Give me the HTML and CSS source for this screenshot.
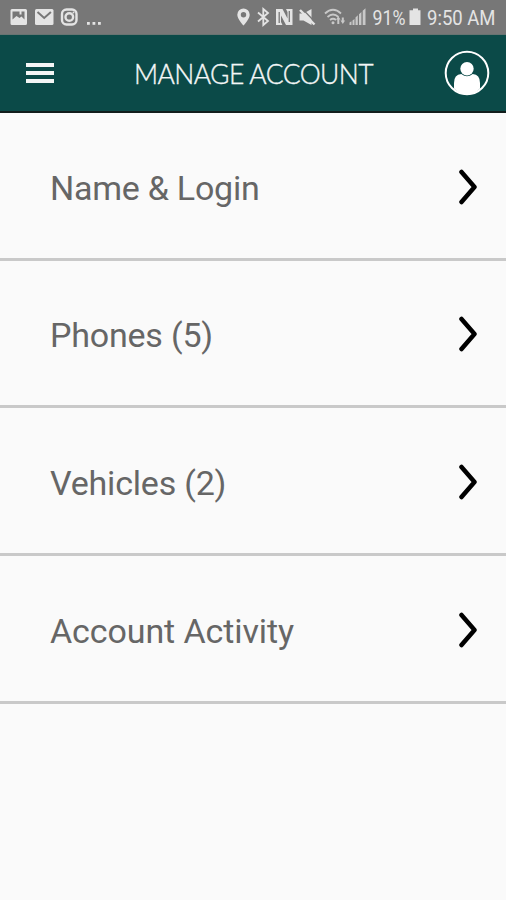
FILE: index.html
```html
<!DOCTYPE html>
<html lang="en">
<head>
<meta charset="utf-8">
<meta name="viewport" content="width=device-width, initial-scale=1">
<title>Manage Account</title>
<link rel="stylesheet" href="styles.css">
</head>
<body>
<div class="status">
  <svg class="status-left" width="106" height="34" viewBox="0 0 106 34">
    <path fill-rule="evenodd" d="M12 9h13.500q1.500 0 1.500 1.500v13q0 1.500-1.500 1.500h-13.500q-1.500 0-1.500-1.500v-13q0-1.500 1.500-1.500zM12.500 11.500v8l4-3.500 3 2 2-1.500 3 3v-8h-3v3h-2v-3z"/>
    <rect x="35" y="9" width="18.500" height="16" rx="1.500"/>
    <path class="cut" d="M37.500 12l6.700 6 6.700-6"/>
    <rect class="line" x="62" y="9.500" width="14.500" height="15" rx="4.500"/>
    <circle class="line" cx="69.300" cy="17" r="3.800"/>
    <circle cx="73.500" cy="12.500" r="1"/>
    <rect x="87" y="22" width="2.800" height="2.800"/><rect x="92.500" y="22" width="2.800" height="2.800"/><rect x="98" y="22" width="2.800" height="2.800"/>
  </svg>
  <svg class="status-right" width="276" height="34" viewBox="230 0 276 34">
    <path fill-rule="evenodd" d="M243.500 8.500a6.200 6.200 0 0 0-6.200 6.200c0 4.300 6.200 10.800 6.200 10.800s6.200-6.500 6.200-10.800a6.200 6.200 0 0 0-6.200-6.200zm0 3.600a2.700 2.700 0 1 1 0 5.400a2.700 2.700 0 0 1 0-5.400z"/>
    <path class="line thin" d="M258 12.500l10 8.500-4.700 4v-16l4.700 4-10 8.500"/>
    <path d="M276 9h6.500l5 9.500v-6.500l-1.500-3h6.500v16h-6.500l-5-9.500v6.500l1.500 3h-6.500z"/>
    <path class="slash" d="M279.200 23v-11M289.300 11v11"/>
    <path d="M299.500 13.500h4l8-4.500v16l-8-4.500h-4z"/>
    <path class="slash" d="M301.500 8l14.500 15"/>
    <path class="line" d="M300 10l14.500 14.500"/>
    <g class="dim">
      <path class="line thin" d="M325 13.500q8-7.500 16 0M327.500 17q5.500-5 11 0M330 20q3-2.500 6 0"/>
      <circle cx="333" cy="22.800" r="1.500"/>
      <path d="M336 19.500l2.300-3 2.300 3h-1.300v4.500h-2v-4.500zM340.500 20.500h1.300v-3h2v3h1.300l-2.300 3.500z"/>
      <path d="M349.500 22.500l2-1.200v3.700h-2zM352.500 20.500l2-1.500v6h-2zM355.500 17.500l2.300-2.200v9.700h-2.300zM359 14.200l2.400-2.200v13h-2.400zM362.700 10.800l2.800-2.500v16.700h-2.800z"/>
    </g>
    <text x="372.500" y="25" textLength="33" lengthAdjust="spacingAndGlyphs">91%</text>
    <path d="M413 8.500h5v1.800h2.500v14.700h-11v-14.700h3.500z"/>
    <text x="427" y="25" textLength="68.500" lengthAdjust="spacingAndGlyphs">9:50 AM</text>
  </svg>
</div>
<header class="bar">
  <button class="menu" aria-label="Menu"><span></span><span></span><span></span></button>
  <h1>MANAGE ACCOUNT</h1>
  <svg class="avatar" width="46" height="46" viewBox="0 0 46 46">
    <circle class="ring" cx="23" cy="23" r="21.300"/>
    <circle cx="23" cy="18.700" r="6.700"/>
    <path d="M10 38.500v-5.500q0-8.500 7.300-9q5.700 4.500 11.400 0q7.300.500 7.300 9v5.500q-5.500 6-13 6t-13-6z"/>
  </svg>
</header>
<main>
  <a class="row"><span class="label name">Name &amp; Login</span><svg width="20" height="36" viewBox="0 0 20 36"><path d="M3.500 3l13 15-13 15"/></svg></a>
  <a class="row"><span class="label phones">Phones (5)</span><svg width="20" height="36" viewBox="0 0 20 36"><path d="M3.500 3l13 15-13 15"/></svg></a>
  <a class="row"><span class="label vehicles">Vehicles (2)</span><svg width="20" height="36" viewBox="0 0 20 36"><path d="M3.500 3l13 15-13 15"/></svg></a>
  <a class="row"><span class="label activity">Account Activity</span><svg width="20" height="36" viewBox="0 0 20 36"><path d="M3.500 3l13 15-13 15"/></svg></a>
</main>
</body>
</html>
```
FILE: styles.css
```css
* { box-sizing: border-box; }
body { margin: 0; height: 900px; background: #fafafa; font-family: Roboto, "Liberation Sans", sans-serif; overflow: hidden; }
svg { display: block; flex: none; }
.status { height: 35px; background: #777; border-bottom: 1px solid #687472; display: flex; justify-content: space-between; }
.status svg { fill: #e4e4e4; }
.status text { font-size: 21px; }
.status .line { fill: none; stroke: #e4e4e4; stroke-width: 2.4; }
.status .thin { stroke-width: 1.8; }
.status .cut { fill: none; stroke: #777; stroke-width: 2; }
.status .slash { fill: none; stroke: #777; stroke-width: 1.3; }
.status .dim { opacity: .75; }
.bar { height: 78px; background: #0b4a48; border-bottom: 2px solid #111d1c; display: flex; align-items: center; padding: 0 16px 0 26px; }
.menu { width: 28px; padding: 0; border: 0; background: none; display: grid; gap: 4px; }
.menu span { height: 4px; background: #f4f6f6; }
h1 { margin: 1px 0 0 80px; font: 300 26.500px/32px Lato, sans-serif; color: #f4f7f7; -webkit-text-stroke: .35px #f4f7f7; white-space: nowrap; letter-spacing: -.6px; }
.avatar { fill: #fff; margin-left: auto; }
.ring { fill: none; stroke: #fff; stroke-width: 2; }
.row { height: 147.670px; border-bottom: 3px solid #c9c9c9; display: flex; align-items: center; justify-content: space-between; padding: 3px 28px 0 50px; }
.row svg { fill: none; stroke: #000; stroke-width: 4.500; stroke-linecap: round; stroke-linejoin: round; }
.label { margin-top: 2px; color: #666; font-size: 34px; line-height: 40px; white-space: nowrap; letter-spacing: -.2px; }
.name { letter-spacing: -.25px; }
.activity { letter-spacing: -.1px; }
```
